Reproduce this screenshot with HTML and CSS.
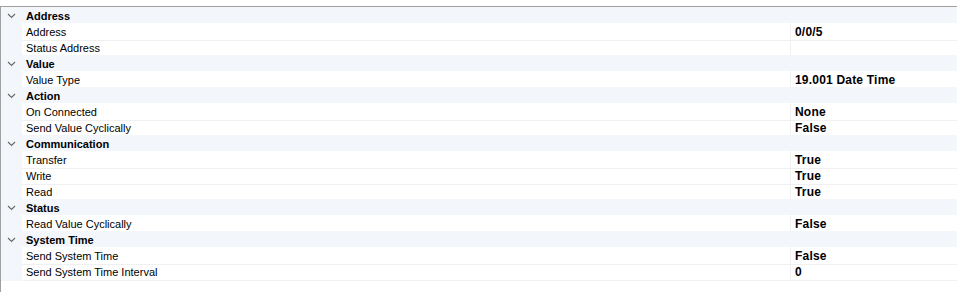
FILE: index.html
```html
<!DOCTYPE html>
<html lang="en">
<head>
  <meta charset="UTF-8">
  <title>Properties</title>
  <link rel="stylesheet" href="styles.css">
</head>
<body>
  <div class="grid">
    <div class="cat"><span class="chev"><svg width="9" height="6" viewBox="0 0 9 6"><polyline points="1,1 4.5,4.5 8,1" /></svg></span><span class="cat-name">Address</span></div>
    <div class="row"><span class="gutter"></span><span class="name">Address</span><span class="value">0/0/5</span></div>
    <div class="row"><span class="gutter"></span><span class="name">Status Address</span><span class="value"></span></div>

    <div class="cat"><span class="chev"><svg width="9" height="6" viewBox="0 0 9 6"><polyline points="1,1 4.5,4.5 8,1" /></svg></span><span class="cat-name">Value</span></div>
    <div class="row"><span class="gutter"></span><span class="name">Value Type</span><span class="value">19.001 Date Time</span></div>

    <div class="cat"><span class="chev"><svg width="9" height="6" viewBox="0 0 9 6"><polyline points="1,1 4.5,4.5 8,1" /></svg></span><span class="cat-name">Action</span></div>
    <div class="row"><span class="gutter"></span><span class="name">On Connected</span><span class="value">None</span></div>
    <div class="row"><span class="gutter"></span><span class="name">Send Value Cyclically</span><span class="value">False</span></div>

    <div class="cat"><span class="chev"><svg width="9" height="6" viewBox="0 0 9 6"><polyline points="1,1 4.5,4.5 8,1" /></svg></span><span class="cat-name">Communication</span></div>
    <div class="row"><span class="gutter"></span><span class="name">Transfer</span><span class="value">True</span></div>
    <div class="row"><span class="gutter"></span><span class="name">Write</span><span class="value">True</span></div>
    <div class="row"><span class="gutter"></span><span class="name">Read</span><span class="value">True</span></div>

    <div class="cat"><span class="chev"><svg width="9" height="6" viewBox="0 0 9 6"><polyline points="1,1 4.5,4.5 8,1" /></svg></span><span class="cat-name">Status</span></div>
    <div class="row"><span class="gutter"></span><span class="name">Read Value Cyclically</span><span class="value">False</span></div>

    <div class="cat"><span class="chev"><svg width="9" height="6" viewBox="0 0 9 6"><polyline points="1,1 4.5,4.5 8,1" /></svg></span><span class="cat-name">System Time</span></div>
    <div class="row"><span class="gutter"></span><span class="name">Send System Time</span><span class="value">False</span></div>
    <div class="row"><span class="gutter"></span><span class="name">Send System Time Interval</span><span class="value">0</span></div>
  </div>
</body>
</html>
```
FILE: styles.css
```css
body {
  margin: 0;
  padding-top: 6px;
  background: #ffffff;
  font-family: "Liberation Sans", Arial, sans-serif;
  font-size: 11px;
  color: #000000;
  overflow: hidden;
}

.grid {
  border-top: 1px solid #a0a0a0;
  border-left: 1px solid #a0a0a0;
  height: calc(100vh - 7px);
  display: flex;
  flex-direction: column;
}

/* category header */
.cat {
  display: flex;
  align-items: center;
  height: 16px;
  background-color: #f3f6fb;
  font-weight: bold;
}

.chev {
  width: 25px;
  display: flex;
  align-items: center;
  padding: 2px 0 0 6px;
  box-sizing: border-box;
}

.chev polyline {
  fill: none;
  stroke: #6a6a6a;
  stroke-width: 1.2;
}

.cat-name {
  line-height: 16px;
  padding-top: 2px;
}

/* property row */
.row {
  display: grid;
  grid-template-columns: 21px 768px 1fr;
  height: 16px;
}

.gutter {
  background-color: #f3f6fb;
}

.name,
.value {
  border-bottom: 1px solid #f0f0f0;
  box-sizing: border-box;
  padding-top: 2px;
  line-height: 15px;
  white-space: nowrap;
}

.name {
  padding-left: 4px;
}

.value {
  border-left: 1px solid #f0f0f0;
  padding-left: 4px;
  font-weight: bold;
  font-size: 12px;
  letter-spacing: 0.2px;
}
```
